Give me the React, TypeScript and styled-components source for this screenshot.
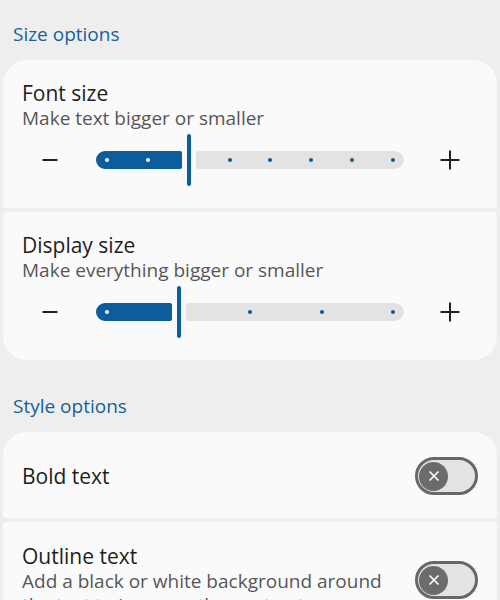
import * as React from 'react';
import styled, { createGlobalStyle } from 'styled-components';

const GlobalStyle = createGlobalStyle`
  html, body {
    margin: 0;
    padding: 0;
    background: #eeeeee;
    font-family: 'Open Sans', 'Noto Sans', sans-serif;
  }
`;

const blue = '#0c5d9c';

interface SliderSetting {
  title: string;
  subtitle: string;
  stops: number;
  value: number;
}

interface ToggleSetting {
  title: string;
  subtitle?: string;
  on: boolean;
}

const sizeOptions: SliderSetting[] = [
  { title: 'Font size', subtitle: 'Make text bigger or smaller', stops: 8, value: 2 },
  { title: 'Display size', subtitle: 'Make everything bigger or smaller', stops: 5, value: 1 },
];

const styleOptions: ToggleSetting[] = [
  { title: 'Bold text', on: false },
  {
    title: 'Outline text',
    subtitle: 'Add a black or white background around the text to increase the contrast',
    on: false,
  },
];

// track geometry: stops sit 11px in from each end of the track
const TRACK_INSET = 11;

const StepSlider: React.FC<{ stops: number; value: number }> = ({ stops, value }) => {
  const pct = (i: number) => i / (stops - 1);
  const pos = (i: number) =>
    `calc(${TRACK_INSET}px + (100% - ${TRACK_INSET * 2}px) * ${pct(i)})`;

  return (
    <SliderRow>
      <StepButton aria-label='smaller'>
        <svg width='18' height='18' viewBox='0 0 18 18'>
          <path d='M1.5 9h15' stroke='#222' strokeWidth='2' />
        </svg>
      </StepButton>
      <Track>
        <Filled style={{ width: `calc(${pos(value)} - 7px)` }} />
        <Rest style={{ left: `calc(${pos(value)} + 7px)` }} />
        {Array.from({ length: stops }).map((_, i) =>
          i === value ? null : (
            <Dot key={i} $active={i < value} style={{ left: pos(i) }} />
          )
        )}
        <Thumb style={{ left: pos(value) }} />
      </Track>
      <StepButton aria-label='bigger'>
        <svg width='22' height='22' viewBox='0 0 22 22'>
          <path d='M1.5 11h19M11 1.5v19' stroke='#222' strokeWidth='2' />
        </svg>
      </StepButton>
    </SliderRow>
  );
};

const Switch: React.FC<{ on: boolean }> = ({ on }) => (
  <SwitchTrack role='switch' aria-checked={on}>
    <Knob>
      <svg width='12' height='12' viewBox='0 0 12 12'>
        <path d='M1.5 1.5l9 9M10.5 1.5l-9 9' stroke='#fff' strokeWidth='1.6' />
      </svg>
    </Knob>
  </SwitchTrack>
);

const App: React.FC = () => (
  <>
    <GlobalStyle />
    <Page>
      <SectionTitle>Size options</SectionTitle>
      <Group>
        {sizeOptions.map(o => (
          <Card key={o.title}>
            <Title>{o.title}</Title>
            <Subtitle>{o.subtitle}</Subtitle>
            <StepSlider stops={o.stops} value={o.value} />
          </Card>
        ))}
      </Group>

      <SectionTitle $spaced>Style options</SectionTitle>
      <Group>
        {styleOptions.map(o => (
          <ToggleCard key={o.title}>
            <TextCol>
              <Title>{o.title}</Title>
              {o.subtitle && <Subtitle>{o.subtitle}</Subtitle>}
            </TextCol>
            <Switch on={o.on} />
          </ToggleCard>
        ))}
      </Group>
    </Page>
  </>
);

const Page = styled.div`
  padding: 8px 3px 0;
  height: 600px;
  box-sizing: border-box;
  overflow: hidden;
`;

const SectionTitle = styled.div<{ $spaced?: boolean }>`
  padding: 14px 10px;
  margin-top: ${p => (p.$spaced ? '20px' : '0')};
  font-size: 19px;
  line-height: 24px;
  color: #175f9c;
`;

const Group = styled.div`
  display: flex;
  flex-direction: column;
  gap: 4px;

  & > * {
    border-radius: 4px;
  }
  & > *:first-child {
    border-top-left-radius: 24px;
    border-top-right-radius: 24px;
  }
  & > *:last-child {
    border-bottom-left-radius: 24px;
    border-bottom-right-radius: 24px;
  }
`;

const Card = styled.div`
  background: #fafafa;
  padding: 20px 19px 22px;
`;

const ToggleCard = styled(Card)`
  display: flex;
  align-items: center;
  gap: 26px;
  padding: 21px 19px 19px;
  min-height: 46px;
`;

const TextCol = styled.div`
  flex: 1;
  min-width: 0;
`;

const Title = styled.div`
  font-size: 21px;
  line-height: 26px;
  color: #1e1e1e;
`;

const Subtitle = styled.div`
  font-size: 19px;
  line-height: 24px;
  color: #575757;
`;

const SliderRow = styled.div`
  margin-top: 4px;
  height: 52px;
  display: grid;
  grid-template-columns: 56px 1fr 56px;
  align-items: center;
  column-gap: 18px;
`;

const StepButton = styled.div`
  display: flex;
  align-items: center;
  justify-content: center;
  height: 100%;
`;

const Track = styled.div`
  position: relative;
  height: 52px;
`;

const Filled = styled.div`
  position: absolute;
  left: 0;
  top: 17px;
  height: 18px;
  background: ${blue};
  border-radius: 9px 2px 2px 9px;
`;

const Rest = styled.div`
  position: absolute;
  right: 0;
  top: 17px;
  height: 18px;
  background: #e3e3e3;
  border-radius: 2px 9px 9px 2px;
`;

const Dot = styled.div<{ $active: boolean }>`
  position: absolute;
  top: 24px;
  width: 4px;
  height: 4px;
  margin-left: -2px;
  border-radius: 50%;
  background: ${p => (p.$active ? '#ffffff' : blue)};
`;

const Thumb = styled.div`
  position: absolute;
  top: 0;
  width: 4px;
  height: 52px;
  margin-left: -2px;
  border-radius: 2px;
  background: ${blue};
`;

const SwitchTrack = styled.div`
  flex: none;
  width: 56px;
  height: 32px;
  border: 3px solid #676767;
  border-radius: 19px;
  background: #e3e3e3;
  display: flex;
  align-items: center;
  padding-left: 1px;
`;

const Knob = styled.div`
  width: 29px;
  height: 29px;
  border-radius: 50%;
  background: #6b6b6b;
  display: flex;
  align-items: center;
  justify-content: center;
`;

export default App;
